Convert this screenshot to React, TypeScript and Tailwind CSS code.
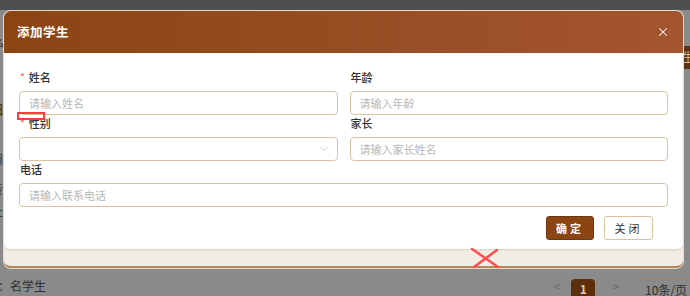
import { ChevronDown, X } from 'lucide-react';

const font = { fontFamily: '"Noto Sans CJK SC", "Noto Sans", sans-serif' };

function Label({ text, required }: { text: string; required?: boolean }) {
  return (
    <div className="mb-[6px] flex h-[16px] items-center pl-[1px] text-[11px] leading-[16px] font-medium text-[#303133]">
      {required && <span className="mr-[4px] text-[10px] text-[#f56c6c]">*</span>}
      {text}
    </div>
  );
}

function Field({ placeholder }: { placeholder: string }) {
  return (
    <div className="flex h-[24px] items-center rounded-[4px] border border-[#dcc3a0] bg-white px-[9px] text-[11px] text-[#b8b8b8]">
      {placeholder}
    </div>
  );
}

export default function App() {
  return (
    <div className="relative h-[296px] w-[690px] overflow-hidden bg-[#8a8a8a]" style={font}>
      {/* page behind the mask */}
      <div className="h-[10px] bg-[#4f4f4f]" />
      <div className="flex h-[258px] flex-col">
        <div className="ml-[-8px] mt-[22px] text-[13px] text-[#333]">么</div>
        <div className="ml-auto mt-[-6px] flex h-[23px] w-[8px] items-center bg-[#5b3312] text-[12px] text-[#cbb9a4]">生</div>
        <div className="ml-[-9px] mt-[30px] text-[13px] text-[#3a2a1a]">日</div>
        <div className="ml-[-9px] mt-[32px] text-[12px] text-[#444]">编</div>
        <div className="ml-[-9px] mt-[12px] text-[12px] text-[#444]">转</div>
        <div className="ml-[-9px] mt-[4px] text-[12px] text-[#444]">址</div>
      </div>
      <div className="flex h-[28px] items-end text-[12px] text-[#2f2f2f]">
        <span className="ml-[-2px] pb-[1px]">：名学生</span>
        <span className="ml-auto pb-[1px] text-[12px] text-[#6a6a6a]">&lt;</span>
        <span className="ml-[11px] flex h-[17px] w-[24px] items-start justify-center rounded-t-[4px] bg-[#5c2e0c] pt-[1px] text-[12px] font-bold text-[#d9cbb8]">
          1
        </span>
        <span className="ml-[17px] pb-[1px] text-[12px] text-[#6a6a6a]">&gt;</span>
        <span className="ml-[18px] mr-[-19px] flex h-[17px] w-[72px] items-start rounded-t-[4px] border border-b-0 border-[#a08a70] pl-[7px] pt-[1px] text-[12px] text-[#2f2f2f]">
          10条/页
        </span>
      </div>

      {/* dialog */}
      <div className="absolute left-[4px] top-[11px] flex h-[257px] w-[679px] flex-col overflow-hidden rounded-[7px] border-b-2 border-[#b08a5c] bg-gradient-to-b from-[#e6e0d3] to-[#f3eee4] shadow-[0_0_0_1px_#e8dcc6]">
        <div className="flex h-[42px] shrink-0 items-center justify-between bg-gradient-to-r from-[#8b4513] to-[#a3552f] pl-[13px] pr-[13px]">
          <span className="text-[12.5px] font-bold tracking-[0.5px] text-white">添加学生</span>
          <X className="h-[14px] w-[14px] text-white" strokeWidth={1.75} />
        </div>
        <div className="flex flex-col rounded-b-[6px] bg-white px-[15px] pb-[9px] pt-[16px] shadow-[0_1px_2px_rgba(0,0,0,0.12)]">
          <div className="grid grid-cols-2 gap-x-[12px]">
            <div>
              <Label text="姓名" required />
              <Field placeholder="请输入姓名" />
            </div>
            <div>
              <Label text="年龄" />
              <Field placeholder="请输入年龄" />
            </div>
            <div>
              <Label text="性别" required />
              <div className="flex h-[24px] items-center justify-end rounded-[4px] border border-[#dcc3a0] bg-white pr-[7px]">
                <ChevronDown className="h-[12px] w-[12px] text-[#b8b8b8]" strokeWidth={1.5} />
              </div>
            </div>
            <div>
              <Label text="家长" />
              <Field placeholder="请输入家长姓名" />
            </div>
          </div>
          <div>
            <Label text="电话" />
            <Field placeholder="请输入联系电话" />
          </div>
          <div className="mt-[9px] flex justify-end gap-[10px] pr-[15px]">
            <button className="flex h-[24px] w-[48px] items-center justify-center rounded-[3px] border border-[#6f3710] bg-[#8b4513] text-[11px] font-bold tracking-[3px] text-white">
              确定
            </button>
            <button className="flex h-[24px] w-[49px] items-center justify-center rounded-[3px] border border-[#dcc3a0] bg-white text-[11px] tracking-[3px] text-[#303133]">
              关闭
            </button>
          </div>
        </div>
      </div>

      {/* red annotations */}
      <div className="absolute left-[17px] top-[112px] h-[8px] w-[28px] border-2 border-[#ff3b3b]" />
      <svg className="absolute left-[470px] top-[247px]" width="30" height="22" viewBox="0 0 30 22">
        <path d="M2 2 L28 20 M4 20 L27 3" stroke="#ff4d4d" strokeWidth="2.5" strokeLinecap="round" fill="none" />
      </svg>
    </div>
  );
}
